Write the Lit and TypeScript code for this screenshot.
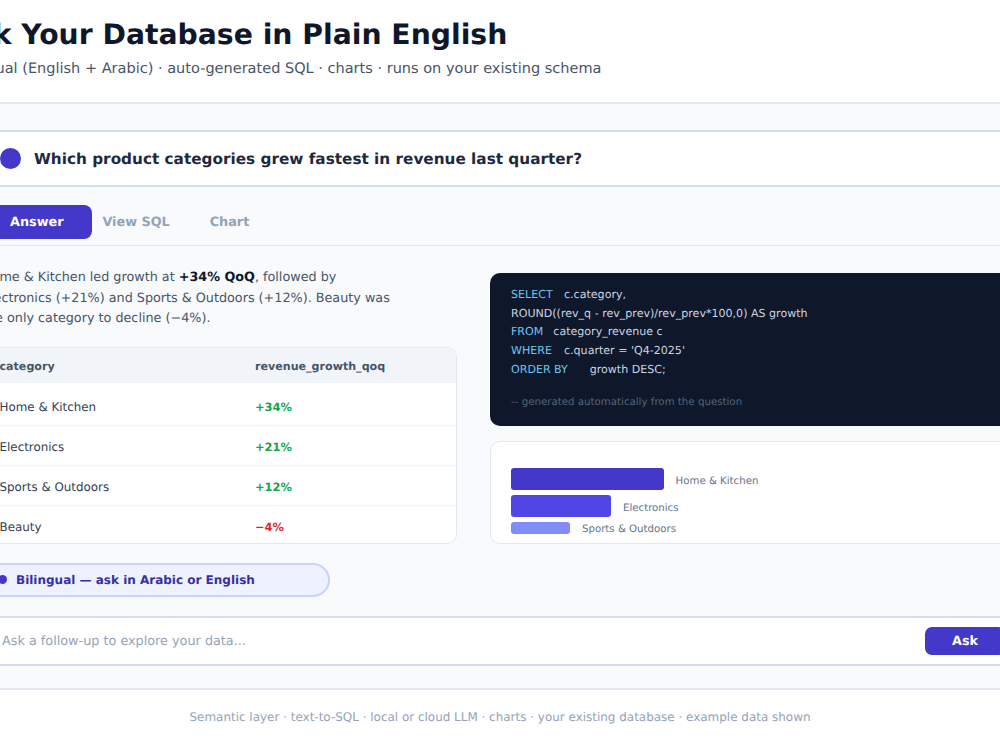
import { LitElement, html, css } from "lit";
import { customElement } from "lit/decorators.js";

@customElement("app-root")
export class AppRoot extends LitElement {
  static styles = css`
    :host { display: block; width: 1000px; height: 750px; overflow: hidden; font-family: "DejaVu Sans", sans-serif; background: #fff; text-rendering: geometricPrecision; }
    * { box-sizing: border-box; }
    .frame { display: flex; justify-content: center; width: 1000px; height: 750px; overflow: hidden; }
    .page { flex: none; width: 1092px; height: 750px; display: flex; flex-direction: column; background: #f8fafc; }
    header { height: 104px; flex: none; background: #fff; border-bottom: 2px solid #e2e8f0; padding: 17px 0 0; }
    h1 { margin: 0; font-size: 28.25px; line-height: 36px; font-weight: 700; color: #0f172a; }
    .sub { margin-top: 5px; padding-left: 1px; font-size: 14.53px; line-height: 22px; color: #475569; }
    main { flex: none; display: flex; flex-direction: column; padding-top: 26px; }
    .question { height: 57px; flex: none; background: #fff; border-top: 2px solid #d5dcec; border-bottom: 2px solid #d5dcec; padding: 0 28px; display: flex; align-items: center; gap: 13px; }
    .qdot { width: 21px; height: 21px; border-radius: 50%; background: #4338ca; margin-left: 18px; flex: none; }
    .qtext { font-size: 15.28px; font-weight: 700; color: #1e293b; }
    .tabs { flex: none; height: 59px; padding: 18px 28px 0; border-bottom: 1px solid #e2e8f0; display: flex; align-items: flex-start; }
    .tab { height: 34px; display: flex; align-items: center; font-size: 12.8px; font-weight: 700; color: #94a3b8; padding: 0 20px; }
    .tab.view { padding-left: 10.3px; }
    .tab.active { color: #fff; background: #4338ca; padding: 0 28.7px 0 28px; border-radius: 8px; }
    .body { flex: none; padding: 22px 28px 0; display: grid; grid-template-columns: 475px 528px; column-gap: 33px; height: 370px; }
    .left, .right { display: flex; flex-direction: column; min-height: 0; }
    .answer { margin: 0; font-size: 12.77px; line-height: 20.5px; color: #475569; width: 420px; }
    .answer b { color: #0f172a; font-weight: 700; }
    .table { margin-top: 17.5px; border: 1px solid #e2e8f0; border-radius: 10px; overflow: hidden; background: #fff; height: 197px; flex: none; }
    .row { display: grid; grid-template-columns: 255.5px 1fr; align-items: center; height: 40px; padding: 2px 0 0 16.5px; font-size: 11.9px; color: #334155; border-bottom: 1px solid #f1f5f9; }
    .row:last-child { border-bottom: 0; height: 38px; padding-top: 4px; }
    .row.th { height: 35px; padding-top: 2px; background: #f1f5f9; font-size: 11.1px; font-weight: 700; color: #475569; border-bottom: 0; }
    .row.first { height: 43px; padding-top: 5px; }
    .up, .down { font-weight: 700; font-size: 11.4px; }
    .up { color: #16a34a; }
    .down { color: #dc2626; }
    .pill { margin-top: 18.5px; align-self: flex-start; width: 347.5px; height: 34px; flex: none; border: 2px solid #c7d2fe; border-radius: 17px; background: #eef2ff; display: flex; align-items: center; gap: 9px; padding-left: 14px; font-size: 12px; font-weight: 700; color: #3730a3; }
    .pdot { width: 9px; height: 9px; border-radius: 50%; background: #4338ca; flex: none; }
    .code { height: 152.5px; flex: none; margin-top: 5px; background: #0f172a; border-radius: 10px; padding: 13px 21px 0; font-size: 11.07px; line-height: 18.67px; color: #cbd5e1; }
    .code .k { color: #6cc8f0; display: inline-block; }
    .k53 { width: 53px; }
    .k42 { width: 42.3px; }
    .k79 { width: 78.7px; }
    .comment { margin-top: 14px; font-size: 10.24px; color: #566479; line-height: 18.67px; }
    .chart { margin-top: 15px; height: 103.5px; flex: none; background: #fff; border: 1px solid #e2e8f0; border-radius: 10px; padding: 26px 20px 0; display: flex; flex-direction: column; gap: 5px; }
    .bar-row { display: flex; align-items: flex-end; gap: 12px; font-size: 10.2px; line-height: 16px; color: #64748b; }
    .bar { height: 22px; border-radius: 3px; flex: none; }
    .bar.short { height: 12px; align-self: flex-start; }
    .b1 { width: 152.6px; background: #4338ca; }
    .b2 { width: 100px; background: #4f46e5; }
    .b3 { width: 59px; background: #818cf8; }
    .ask { flex: none; height: 50px; background: #fff; border-top: 2px solid #d5dcec; border-bottom: 2px solid #d5dcec; display: flex; align-items: center; justify-content: space-between; padding: 0 41px 0 48px; font-size: 12.8px; color: #94a3b8; }
    .askbtn { width: 80px; height: 27.5px; border-radius: 7px; background: #4338ca; color: #fff; font-size: 12.8px; font-weight: 700; display: flex; align-items: center; justify-content: center; }
    footer { flex: 1; margin-top: 21.5px; background: #fff; border-top: 2px solid #e2e8f0; display: flex; justify-content: center; padding-top: 19px; font-size: 11.96px; line-height: 16px; color: #94a3b8; }
  `;

  render() {
    const rows: [string, string, string][] = [
      ["Home & Kitchen", "+34%", "up"],
      ["Electronics", "+21%", "up"],
      ["Sports & Outdoors", "+12%", "up"],
      ["Beauty", "−4%", "down"],
    ];
    return html`<div class="frame"><div class="page">
      <header>
        <h1>Ask Your Database in Plain English</h1>
        <div class="sub">Bilingual (English + Arabic) · auto-generated SQL · charts · runs on your existing schema</div>
      </header>
      <main>
        <div class="question"><span class="qdot"></span><span class="qtext">Which product categories grew fastest in revenue last quarter?</span></div>
        <div class="tabs">
          <div class="tab active">Answer</div>
          <div class="tab view">View SQL</div>
          <div class="tab">Chart</div>
        </div>
        <div class="body">
          <div class="left">
            <p class="answer">Home &amp; Kitchen led growth at <b>+34% QoQ</b>, followed by Electronics (+21%) and Sports &amp; Outdoors (+12%). Beauty was the only category to decline (−4%).</p>
            <div class="table">
              <div class="row th"><span>category</span><span>revenue_growth_qoq</span></div>
              ${rows.map((r, i) => html`<div class="row ${i === 0 ? "first" : ""}"><span>${r[0]}</span><span class=${r[2]}>${r[1]}</span></div>`)}
            </div>
            <div class="pill"><span class="pdot"></span>Bilingual — ask in Arabic or English</div>
          </div>
          <div class="right">
            <div class="code">
              <div><span class="k k53">SELECT</span>c.category,</div>
              <div>ROUND((rev_q - rev_prev)/rev_prev*100,0) AS growth</div>
              <div><span class="k k42">FROM</span>category_revenue c</div>
              <div><span class="k k53">WHERE</span>c.quarter = 'Q4-2025'</div>
              <div><span class="k k79">ORDER BY</span>growth DESC;</div>
              <div class="comment">-- generated automatically from the question</div>
            </div>
            <div class="chart">
              <div class="bar-row"><span class="bar b1"></span><span>Home &amp; Kitchen</span></div>
              <div class="bar-row"><span class="bar b2"></span><span>Electronics</span></div>
              <div class="bar-row"><span class="bar short b3"></span><span>Sports &amp; Outdoors</span></div>
            </div>
          </div>
        </div>
        <div class="ask"><span>Ask a follow-up to explore your data...</span><span class="askbtn">Ask</span></div>
      </main>
      <footer>Semantic layer · text-to-SQL · local or cloud LLM · charts · your existing database · example data shown</footer>
    </div></div>`;
  }
}
